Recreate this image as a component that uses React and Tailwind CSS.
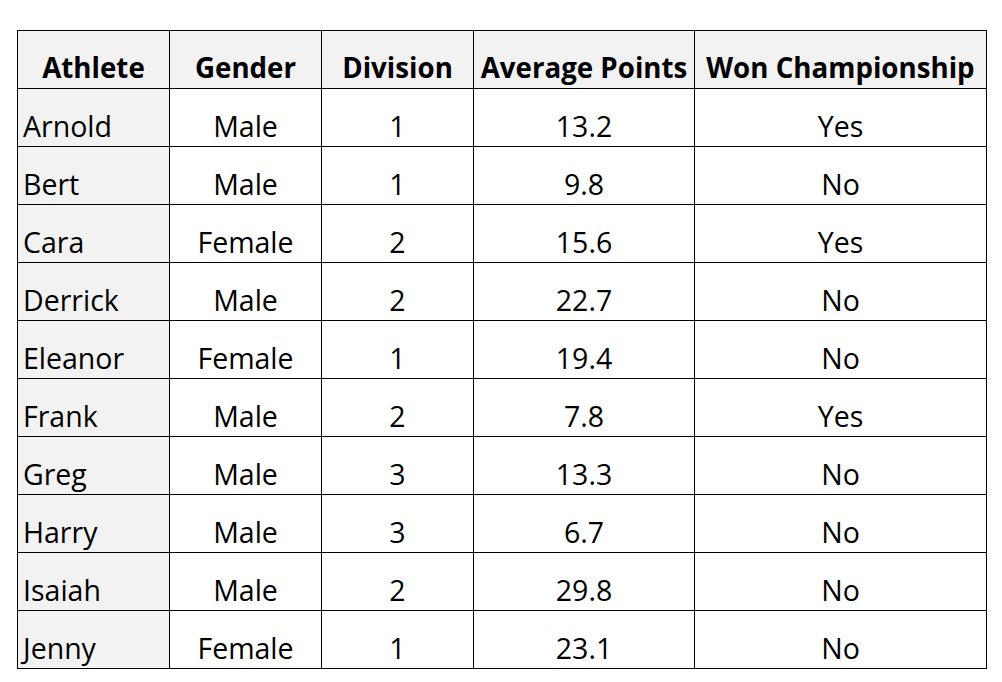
import React from "react";

const rows = [
  ["Arnold", "Male", "1", "13.2", "Yes"],
  ["Bert", "Male", "1", "9.8", "No"],
  ["Cara", "Female", "2", "15.6", "Yes"],
  ["Derrick", "Male", "2", "22.7", "No"],
  ["Eleanor", "Female", "1", "19.4", "No"],
  ["Frank", "Male", "2", "7.8", "Yes"],
  ["Greg", "Male", "3", "13.3", "No"],
  ["Harry", "Male", "3", "6.7", "No"],
  ["Isaiah", "Male", "2", "29.8", "No"],
  ["Jenny", "Female", "1", "23.1", "No"],
];

const headers = ["Athlete", "Gender", "Division", "Average Points", "Won Championship"];
const widths = ["w-[152px]", "w-[152px]", "w-[152px]", "w-[221px]", "w-[292px]"];

export default function App() {
  return (
    <div className="w-[1002px] h-[682px] bg-white pt-[30px] pl-[17px]" style={{ fontFamily: '"Open Sans", sans-serif' }}>
      <table className="border-collapse table-fixed w-[969px] text-black">
        <colgroup>
          {widths.map((w, i) => (
            <col key={i} className={w} />
          ))}
        </colgroup>
        <thead>
          <tr className="h-[58px] bg-[#f2f2f2]">
            {headers.map((h, i) => (
              <th
                key={i}
                className="border border-black align-bottom text-center font-bold text-[27.7px] leading-none pb-[6px] px-0 whitespace-nowrap"
              >
                {h}
              </th>
            ))}
          </tr>
        </thead>
        <tbody>
          {rows.map((r, ri) => (
            <tr key={ri} className="h-[58px]">
              {r.map((c, ci) => (
                <td
                  key={ci}
                  className={
                    "border border-black align-bottom text-[28.5px] leading-none pb-[6px] whitespace-nowrap " +
                    (ci === 0 ? "bg-[#f2f2f2] text-left pl-[5px]" : "text-center")
                  }
                >
                  {c}
                </td>
              ))}
            </tr>
          ))}
        </tbody>
      </table>
    </div>
  );
}
